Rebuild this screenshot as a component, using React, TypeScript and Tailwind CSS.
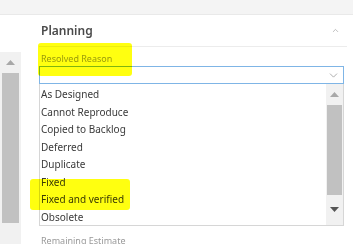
import { ChevronDown, ChevronUp } from "lucide-react";

const REASONS = [
  "As Designed",
  "Cannot Reproduce",
  "Copied to Backlog",
  "Deferred",
  "Duplicate",
  "Fixed",
  "Fixed and verified",
  "Obsolete",
];

const UpArrow = ({ className = "" }: { className?: string }) => (
  <svg width="9" height="5" viewBox="0 0 9 5" className={className}>
    <path d="M0 5 L4.5 0 L9 5 Z" fill="currentColor" />
  </svg>
);

const DownArrow = ({ className = "" }: { className?: string }) => (
  <svg width="9" height="5" viewBox="0 0 9 5" className={className}>
    <path d="M0 0 L4.5 5 L9 0 Z" fill="currentColor" />
  </svg>
);

const App = () => {
  return (
    <div className="relative h-[244px] w-[353px] overflow-hidden bg-white font-['Noto_Sans',sans-serif] text-[#333]">
      <div className="h-[15px] border-b border-[#e9e9e9] bg-[#f4f4f4]" />

      <div className="flex h-[229px]">
        {/* left pane scrollbar */}
        <div className="flex w-[21px] flex-col pt-[37px]">
          <div className="flex flex-1 flex-col items-center bg-[#f1f1f1] px-[2px]">
            <div className="flex h-[21px] items-center justify-center text-[#a8a8a8]">
              <UpArrow />
            </div>
            <div className="h-[150px] w-full bg-[#c1c1c1]" />
          </div>
        </div>

        <div className="flex-1 pl-[18px] pr-[9px]">
          <div className="-mr-[3px] flex h-[32px] items-center justify-between border-b border-[#ececec] pl-[2px] pr-[7px]">
            <span className="text-[12px] font-semibold text-[#4a4a4a]">Planning</span>
            <ChevronUp size={9} strokeWidth={2} className="text-[#aaa]" />
          </div>

          <div className="flex h-[19px] items-end pl-[2px] pb-[1px] text-[9px] text-[#9a9a9a]">Resolved Reason</div>

          <div className="flex h-[18px] items-center justify-end border border-[#7fb5e6] pr-[3px]">
            <ChevronDown size={13} strokeWidth={1.25} className="text-[#888]" />
          </div>

          <div className="flex h-[142px] border border-t-0 border-[#d6d6d6]">
            <ul className="flex-1 pt-[2px]">
              {REASONS.map((r) => (
                <li key={r} className="flex h-[17.5px] items-center pl-[1px] text-[10px] text-[#3a3a3a]">
                  {r}
                </li>
              ))}
            </ul>
            <div className="flex w-[17px] flex-col items-center bg-[#f1f1f1] px-[1px] pb-[1px]">
              <div className="flex h-[21px] w-full items-center justify-center text-[#a8a8a8]">
                <UpArrow />
              </div>
              <div className="h-[90px] w-full bg-[#c1c1c1]" />
              <div className="flex w-full flex-1 items-center justify-center text-[#555]">
                <DownArrow />
              </div>
            </div>
          </div>

          <div className="pl-[2px] pt-[9px] text-[9px] leading-[12px] text-[#999]">Remaining Estimate</div>
        </div>
      </div>

      {/* highlighter marks */}
      <div className="pointer-events-none absolute left-[38px] top-[43px] h-[33px] w-[94px] rounded-[3px] bg-[#ffff10] mix-blend-multiply" />
      <div className="pointer-events-none absolute left-[30px] top-[179px] h-[31px] w-[100px] rounded-[3px] bg-[#ffff10] mix-blend-multiply" />
    </div>
  );
};

export default App;
